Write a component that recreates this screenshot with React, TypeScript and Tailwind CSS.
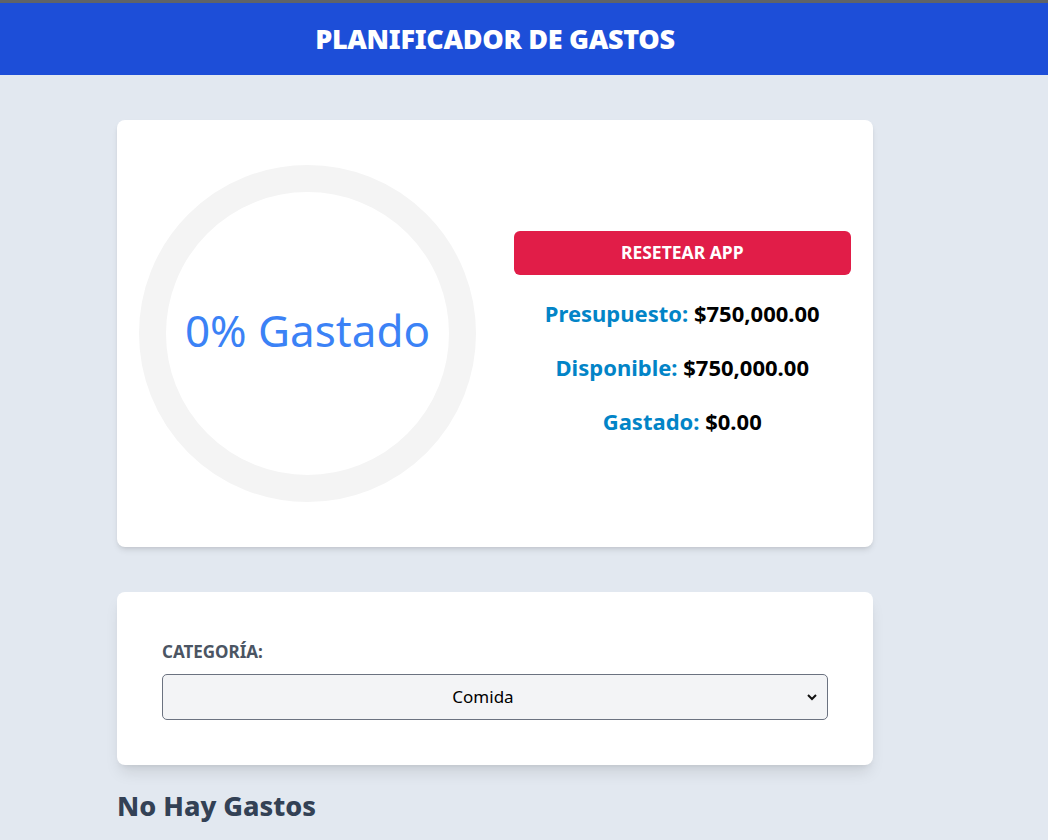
import React from "react";

export default function App() {
  const font = { fontFamily: '"Noto Sans", "Open Sans", sans-serif' };
  return (
    <div className="min-h-[840px] bg-[#e2e8f0] border-t-[3px] border-[#5f6368]" style={font}>
      <header className="bg-[#1d4ed8] h-[72px]">
        <div className="w-[990px] h-full flex items-center justify-center">
          <h1 className="text-white text-[27px] font-black uppercase tracking-[-0.3px]">Planificador de Gastos</h1>
        </div>
      </header>
      <div className="w-[990px]">
        <main className="w-[756px] mx-auto pt-[45px]">
          <section className="bg-white rounded-lg shadow-md px-[22px] py-[45px] grid grid-cols-2 gap-[37px] items-center">
            <div className="relative w-[337px] h-[337px]">
              <svg width="337" height="337" viewBox="0 0 337 337" className="block">
                <circle cx="168.5" cy="168.5" r="155" fill="none" stroke="#f4f4f4" strokeWidth="27" />
              </svg>
              <div className="absolute inset-0 flex items-center justify-center pb-[8px]">
                <span className="text-[#3b82f6] text-[44px] leading-none">0% Gastado</span>
              </div>
            </div>
            <div className="flex flex-col items-center gap-[22px]">
              <button className="w-full h-[44px] bg-[#e11d48] rounded-md text-white font-bold text-[17.5px] uppercase">
                Resetear App
              </button>
              <p className="text-[22px] font-bold leading-[32px] text-black">
                <span className="text-[#0284c7]">Presupuesto: </span>$750,000.00
              </p>
              <p className="text-[22px] font-bold leading-[32px] text-black">
                <span className="text-[#0284c7]">Disponible: </span>$750,000.00
              </p>
              <p className="text-[22px] font-bold leading-[32px] text-black">
                <span className="text-[#0284c7]">Gastado: </span>$0.00
              </p>
            </div>
          </section>

          <section className="mt-[45px] bg-white rounded-lg shadow-lg px-[45px] pt-[47px] pb-[45px]">
            <label className="block text-[17px] leading-[26px] font-bold text-[#4b5563] uppercase mb-[9px]">Categoría:</label>
            <div className="relative">
              <div className="h-[46px] w-full bg-[#f3f4f6] border border-[#6b7280] rounded-[5px] flex items-center justify-center pr-[24px] text-[17px] text-black">
                Comida
              </div>
              <svg className="absolute right-[10px] top-1/2 -translate-y-1/2" width="12" height="12" viewBox="0 0 12 12">
                <path d="M2 4 L6 8 L10 4" fill="none" stroke="#111" strokeWidth="2" />
              </svg>
            </div>
          </section>

          <h2 className="mt-[21px] text-[27px] font-extrabold text-[#334155]">No Hay Gastos</h2>
        </main>
      </div>
    </div>
  );
}
